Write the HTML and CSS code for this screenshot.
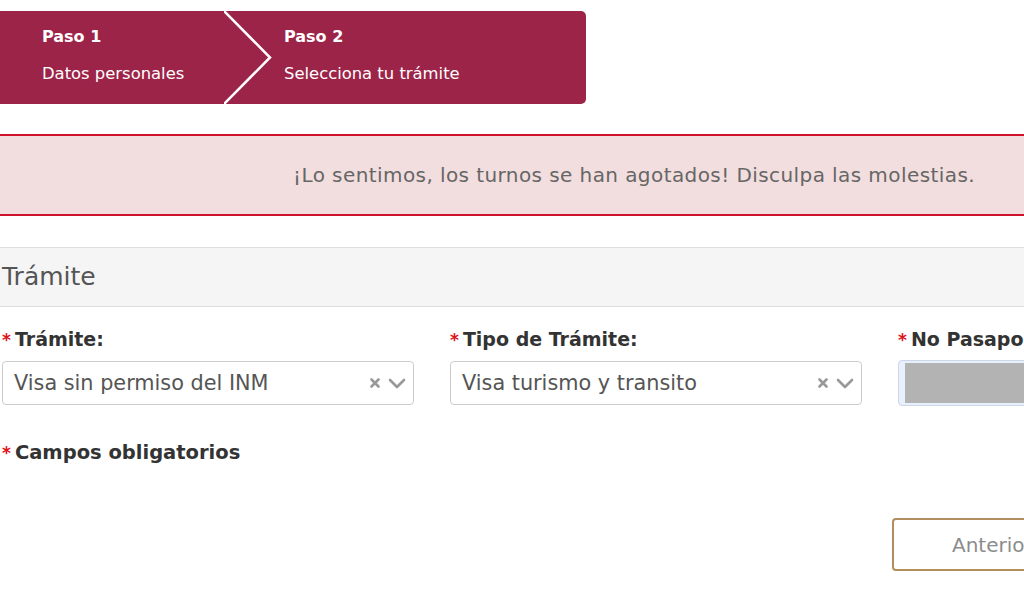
FILE: index.html
```html
<!DOCTYPE html>
<html lang="es">
<head>
<meta charset="utf-8">
<title>Selecciona tu trámite</title>
<link rel="stylesheet" href="styles.css">
</head>
<body>
<div class="page">
  <div class="steps">
    <div class="step step-1">
      <div class="step-title">Paso 1</div>
      <div class="step-sub">Datos personales</div>
    </div>
    <svg class="chevron" width="50" height="93" viewBox="0 0 50 93" aria-hidden="true">
      <polyline points="0,0 46,46.5 0,93" fill="none" stroke="#ffffff" stroke-width="2.5"/>
    </svg>
    <div class="step step-2">
      <div class="step-title">Paso 2</div>
      <div class="step-sub">Selecciona tu trámite</div>
    </div>
  </div>

  <div class="alert">¡Lo sentimos, los turnos se han agotados! Disculpa las molestias.</div>

  <div class="panel-heading">Trámite</div>

  <div class="fields">
    <div class="field">
      <label class="label"><span class="req">*</span>Trámite:</label>
      <div class="select">
        <span class="select-value">Visa sin permiso del INM</span>
        <span class="select-icons">
          <svg width="14" height="14" viewBox="0 0 14 14"><path d="M3.5 3.5 L10.5 10.5 M10.5 3.5 L3.5 10.5" stroke="#999" stroke-width="2.6" stroke-linecap="round"/></svg>
          <svg width="18" height="14" viewBox="0 0 18 14"><polyline points="2,4 9,11 16,4" fill="none" stroke="#999" stroke-width="2.6" stroke-linecap="round" stroke-linejoin="round"/></svg>
        </span>
      </div>
    </div>
    <div class="field">
      <label class="label"><span class="req">*</span>Tipo de Trámite:</label>
      <div class="select">
        <span class="select-value">Visa turismo y transito</span>
        <span class="select-icons">
          <svg width="14" height="14" viewBox="0 0 14 14"><path d="M3.5 3.5 L10.5 10.5 M10.5 3.5 L3.5 10.5" stroke="#999" stroke-width="2.6" stroke-linecap="round"/></svg>
          <svg width="18" height="14" viewBox="0 0 18 14"><polyline points="2,4 9,11 16,4" fill="none" stroke="#999" stroke-width="2.6" stroke-linecap="round" stroke-linejoin="round"/></svg>
        </span>
      </div>
    </div>
    <div class="field">
      <label class="label"><span class="req">*</span>No Pasaporte:</label>
      <div class="input-masked"><div class="mask"></div></div>
    </div>
  </div>

  <div class="required-note"><span class="req">*</span>Campos obligatorios</div>

  <div class="actions">
    <button class="btn-outline" type="button">Anterior</button>
  </div>
</div>
</body>
</html>
```

FILE: styles.css
```css
html, body {
  margin: 0;
  padding: 0;
  background: #ffffff;
  overflow: hidden;
}
body {
  font-family: "DejaVu Sans", "Open Sans", sans-serif;
  color: #333333;
}
.page {
  width: 1300px;
  padding-top: 11px;
  padding-left: 2px;
}
.steps {
  display: flex;
  width: 586px;
  height: 93px;
  margin-left: -2px;
  background: #9d2449;
  border-radius: 0 5px 5px 0;
  color: #ffffff;
  align-items: stretch;
}
.step {
  display: flex;
  flex-direction: column;
  justify-content: flex-start;
  padding-top: 15px;
}
.step-1 {
  width: 182px;
  padding-left: 42px;
}
.chevron {
  display: block;
  flex: none;
}
.step-2 {
  padding-left: 10px;
}
.step-title {
  font-weight: 700;
  font-size: 16px;
  line-height: 22px;
}
.step-sub {
  font-size: 16.4px;
  line-height: 20px;
  margin-top: 16px;
}
.alert {
  margin-top: 30px;
  margin-left: -2px;
  height: 78px;
  background: #f2dede;
  border-top: 2px solid #d0112b;
  border-bottom: 2px solid #d0112b;
  color: #666666;
  font-size: 20px;
  line-height: 78px;
  padding-left: 293px;
  letter-spacing: 0.42px;
}
.panel-heading {
  margin-top: 31px;
  margin-left: -2px;
  padding-left: 2px;
  height: 58px;
  line-height: 58px;
  background: #f5f5f5;
  border-top: 1px solid #dddddd;
  border-bottom: 1px solid #dddddd;
  font-size: 25px;
  color: #555555;
}
.fields {
  display: grid;
  grid-template-columns: 412px 412px 412px;
  column-gap: 36px;
  margin-top: 19px;
}
.label {
  display: block;
  font-weight: 700;
  font-size: 19px;
  line-height: 26px;
  color: #333333;
  margin-bottom: 8px;
}
.req {
  color: #e0121c;
  font-size: 17px;
  font-weight: 700;
  margin-right: 4px;
}
.select {
  box-sizing: border-box;
  height: 44px;
  border: 1px solid #cccccc;
  border-radius: 4px;
  display: flex;
  align-items: center;
  justify-content: space-between;
  padding: 0 7px 0 11px;
  background: #ffffff;
}
.select-value {
  font-size: 20.8px;
  color: #555555;
}
.select-icons {
  display: flex;
  align-items: center;
  gap: 6px;
}
.select-icons svg {
  display: block;
}
.input-masked {
  box-sizing: border-box;
  height: 46px;
  border: 1px solid #cdd6e6;
  border-radius: 4px;
  background: #e8f0fe;
  padding: 2px 0 2px 6px;
  margin-top: -1px;
}
.mask {
  height: 100%;
  background: #b3b3b3;
}
.required-note {
  margin-top: 34px;
  font-weight: 700;
  font-size: 19.5px;
  line-height: 26px;
}
.actions {
  margin-top: 52px;
  padding-left: 890px;
}
.btn-outline {
  box-sizing: border-box;
  width: 200px;
  height: 53px;
  background: #ffffff;
  border: 2px solid #b38e5d;
  border-radius: 4px;
  color: #8c8c8c;
  font-family: "DejaVu Sans", "Open Sans", sans-serif;
  font-size: 20px;
  text-align: left;
  padding-left: 58px;
}
```
